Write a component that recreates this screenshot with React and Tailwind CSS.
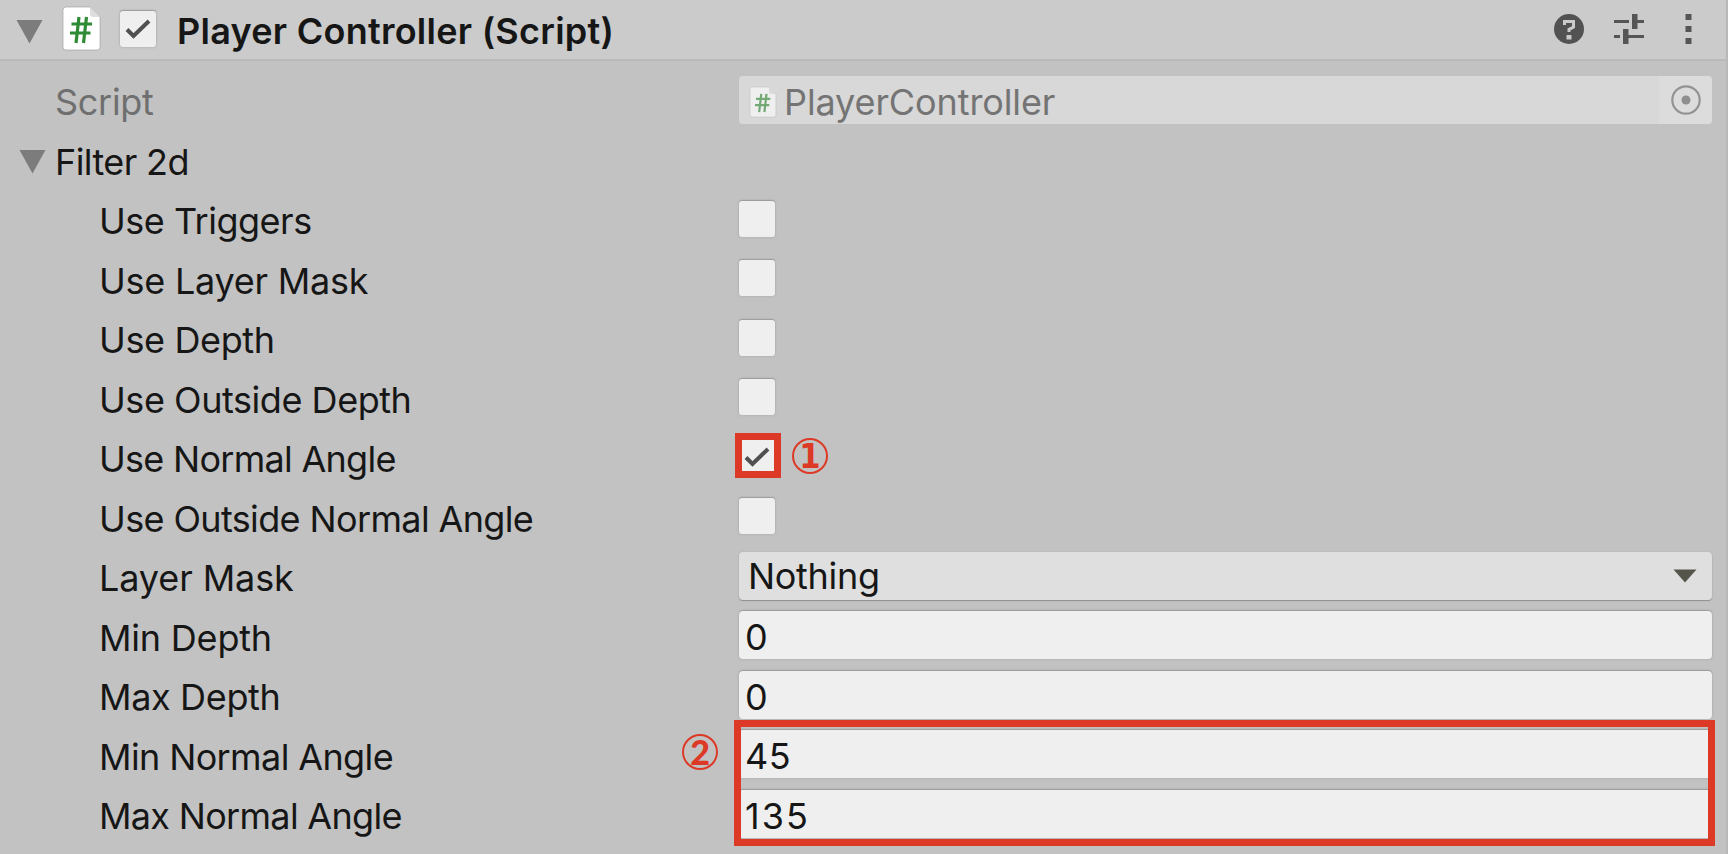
const boxShadow = 'shadow-[0_-1px_1px_#9c9c9c,0_0_3px_#a8a8a8]';

function Fold({ className }) {
  return (
    <svg viewBox="0 0 27 24" className={`h-6 w-[27px] shrink-0 ${className}`}>
      <path d="M.5 0h26L13.5 23.5z" fill="#7c7c7c" />
    </svg>
  );
}

function ScriptIcon({ className }) {
  return (
    <svg viewBox="0 0 37 43" className={`shrink-0 overflow-visible ${className}`}>
      <path
        d="M3 0h24l10 10v30q0 3-3 3H3q-3 0-3-3V3q0-3 3-3z"
        fill="#fff"
        stroke="#9a9a9a"
        strokeOpacity=".6"
        strokeWidth="1"
      />
      <path d="M27 0v7q0 3 3 3h7z" fill="#dedede" />
      <path
        d="M16 10l-3 26M23.500 10l-3 26M8.500 17h20.500M7 26h20.500"
        stroke="#2f8a34"
        strokeWidth="3.200"
        fill="none"
      />
    </svg>
  );
}

function Check({ checked }) {
  return (
    <span className={`flex h-9 w-9 shrink-0 items-center justify-center rounded-[3px] bg-[#efefef] ${boxShadow}`}>
      {checked && (
        <svg viewBox="0 0 36 36" className="h-9 w-9">
          <path d="M7 18.500l6.500 6.500L29 10" fill="none" stroke="#505050" strokeWidth="4" />
        </svg>
      )}
    </span>
  );
}

function Row({ label, tracking, indent = true, muted, children }) {
  return (
    <div className="flex h-[59.5px] items-center">
      <span
        className={`w-[739px] shrink-0 pt-[5px] ${tracking} ${indent ? 'pl-[99px]' : 'pl-[55px]'} ${muted ? 'text-[#6f6f6f]' : ''}`}
      >
        {label}
      </span>
      {children}
    </div>
  );
}

function NumberField({ value, tracking }) {
  return (
    <div
      className={`flex h-12 w-[973px] items-center rounded-[4px] bg-[#efefef] pt-[4px] pl-[6px] ${tracking} ${boxShadow}`}
    >
      {value}
    </div>
  );
}

function Marker({ digit, className }) {
  return (
    <span
      className={`absolute flex h-9 w-9 items-center justify-center rounded-full border-2 border-[#dc3927] text-[34px] leading-none text-[#dc3927] ${className}`}
    >
      {digit}
    </span>
  );
}

const toggles = [
  ['Use Triggers', false, 'tracking-[-0.5px]'],
  ['Use Layer Mask', false, 'tracking-[-0.25px]'],
  ['Use Depth', false, 'tracking-[-0.37px]'],
  ['Use Outside Depth', false, 'tracking-[-0.45px]'],
  ['Use Normal Angle', true, 'tracking-[-0.72px]'],
  ['Use Outside Normal Angle', false, 'tracking-[-0.63px]'],
];

const numbers = [
  ['Min Depth', '0', 'tracking-[-0.2px]', ''],
  ['Max Depth', '0', 'tracking-[-0.35px]', ''],
  ['Min Normal Angle', '45', 'tracking-[-0.62px]', 'tracking-[0.5px]'],
  ['Max Normal Angle', '135', 'tracking-[-0.69px]', 'tracking-[2px]'],
];

export default function App() {
  return (
    <div className="relative h-[854px] w-[1728px] overflow-hidden border-r-2 border-[#b8b8b8] bg-[#c2c2c2] font-['Inter',sans-serif] text-[36px] leading-none whitespace-nowrap text-[#161616]">
      <header className="flex h-[61px] items-start border-b-2 border-[#b9b9b9] bg-[#cbcbcb]">
        <Fold className="mt-5 ml-4" />
        <ScriptIcon className="mt-[7px] ml-5 h-[43px] w-[37px]" />
        <div className="mt-[11px] ml-5">
          <Check checked />
        </div>
        <h1 className="mt-[13px] ml-[21px] text-[36px] leading-9 font-semibold tracking-[0.26px]">
          Player Controller (Script)
        </h1>
        <div className="mt-[14px] mr-[34px] ml-auto flex items-center">
          <svg viewBox="0 0 30 30" className="mr-[30px] h-[30px] w-[30px]">
            <circle cx="15" cy="15" r="15" fill="#525252" />
            <path d="M10.500 11V7.500h9V13L15 15.500V18" fill="none" stroke="#cbcbcb" strokeWidth="3" />
            <path d="M12.500 21h5v4.500h-5z" fill="#cbcbcb" />
          </svg>
          <svg viewBox="0 0 30 30" className="mr-[41px] h-[30px] w-[30px]">
            <path
              d="M0 6h15v3H0zM18 0h5.500v15H18zM23.500 6H30v3h-6.500zM0 21h6v3H0zM9 15h5.500v15H9zM14.500 21H30v3H14.500z"
              fill="#555"
            />
          </svg>
          <svg viewBox="0 0 7 30" className="h-[30px] w-[7px]">
            <path d="M.5 0h6v6h-6zM.5 12h6v6h-6zM.5 24h6v6h-6z" fill="#555" />
          </svg>
        </div>
      </header>

      <main className="pt-[9px]">
        <Row label="Script" tracking="tracking-[-0.3px]" indent={false} muted>
          <div className="flex h-12 w-[973px] items-center overflow-hidden rounded-[4px] bg-[#d8d8d8]">
            <ScriptIcon className="mt-1 ml-[11px] h-[30px] w-[26px] opacity-60" />
            <span className="pt-[5px] pl-2 tracking-[-0.1px] text-[#747474]">PlayerController</span>
            <span className="ml-auto flex h-full w-[53px] items-center justify-center bg-[#dcdcdc]">
              <svg viewBox="0 0 30 30" className="h-[30px] w-[30px]">
                <circle cx="15" cy="15" r="13.700" fill="none" stroke="#939393" strokeWidth="2.200" />
                <circle cx="15" cy="15" r="4.500" fill="#8f8f8f" />
              </svg>
            </span>
          </div>
        </Row>
        <div className="flex h-[59.5px] items-center">
          <Fold className="mt-[6px] ml-[19px]" />
          <span className="pt-[5px] pl-[9px] tracking-[-0.6px]">Filter 2d</span>
        </div>
        {toggles.map(([label, on, tracking]) => (
          <Row key={label} label={label} tracking={tracking}>
            <Check checked={on} />
          </Row>
        ))}
        <Row label="Layer Mask" tracking="tracking-[-0.1px]">
          <div className="flex h-12 w-[973px] items-center justify-between rounded-[4px] bg-[#dfdfdf] pr-[15px] pl-[9px] shadow-[0_1px_1px_#8f8f8f,0_0_2px_#b0b0b0]">
            <span className="tracking-[-0.3px]">Nothing</span>
            <svg viewBox="0 0 24 14" className="h-[14px] w-6">
              <path d="M.5.500h23L12 13.500z" fill="#55554c" />
            </svg>
          </div>
        </Row>
        {numbers.map(([label, value, tracking, valueTracking]) => (
          <Row key={label} label={label} tracking={tracking}>
            <NumberField value={value} tracking={valueTracking} />
          </Row>
        ))}
      </main>

      <div className="absolute top-[433px] left-[735px] h-[45px] w-[46px] border-7 border-[#dc3927]" />
      <div className="absolute top-[720px] left-[734px] h-[126px] w-[981px] border-7 border-[#dc3927]" />
      <Marker
        digit="1"
        className="top-[438px] left-[792px] font-['DejaVu_Sans_Condensed','DejaVu_Sans',sans-serif] font-bold"
      />
      <Marker digit="2" className="top-[734px] left-[682px] font-['Lato',sans-serif] font-black" />
    </div>
  );
}
